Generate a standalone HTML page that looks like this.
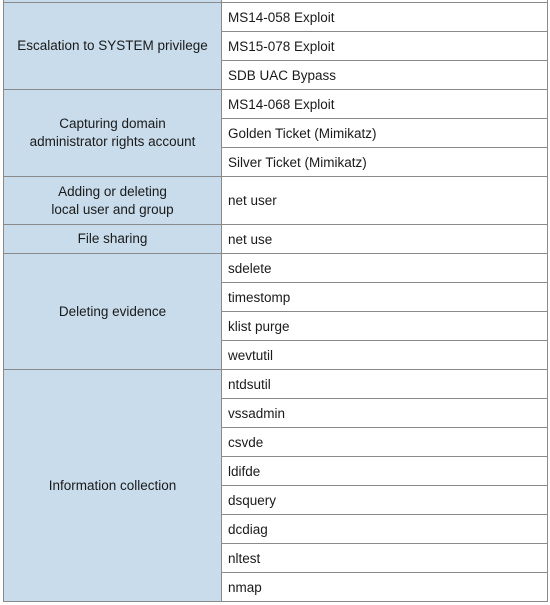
<!DOCTYPE html>
<html><head><style>
body{margin:0;width:550px;height:605px;background:#fff;position:relative;overflow:hidden;font-family:"Liberation Sans",sans-serif;font-size:13.5px;color:#1a1a1a}
.c{position:absolute;box-sizing:border-box;border:1px solid #8a8a8a;display:flex;align-items:center}
.l{background:#c8dceb;justify-content:center;text-align:center;line-height:18px}
.r{background:#fff;padding-left:6px}
</style></head><body>
<div class="c l" style="left:3px;top:-27px;width:219px;height:30px"></div>
<div class="c r" style="left:221px;top:-27px;width:327px;height:30px"></div>

<div class="c l" style="left:3px;top:2px;width:219px;height:88px">Escalation to SYSTEM privilege</div>
<div class="c r" style="left:221px;top:2px;width:327px;height:30px">MS14-058 Exploit</div>
<div class="c r" style="left:221px;top:31px;width:327px;height:30px">MS15-078 Exploit</div>
<div class="c r" style="left:221px;top:60px;width:327px;height:30px">SDB UAC Bypass</div>

<div class="c l" style="left:3px;top:89px;width:219px;height:88px">Capturing domain<br>administrator rights account</div>
<div class="c r" style="left:221px;top:89px;width:327px;height:30px">MS14-068 Exploit</div>
<div class="c r" style="left:221px;top:118px;width:327px;height:30px">Golden Ticket (Mimikatz)</div>
<div class="c r" style="left:221px;top:147px;width:327px;height:30px">Silver Ticket (Mimikatz)</div>

<div class="c l" style="left:3px;top:176px;width:219px;height:49px">Adding or deleting<br>local user and group</div>
<div class="c r" style="left:221px;top:176px;width:327px;height:49px">net user</div>

<div class="c l" style="left:3px;top:224px;width:219px;height:30px">File sharing</div>
<div class="c r" style="left:221px;top:224px;width:327px;height:30px">net use</div>

<div class="c l" style="left:3px;top:253px;width:219px;height:117px">Deleting evidence</div>
<div class="c r" style="left:221px;top:253px;width:327px;height:30px">sdelete</div>
<div class="c r" style="left:221px;top:282px;width:327px;height:30px">timestomp</div>
<div class="c r" style="left:221px;top:311px;width:327px;height:30px">klist purge</div>
<div class="c r" style="left:221px;top:340px;width:327px;height:30px">wevtutil</div>

<div class="c l" style="left:3px;top:369px;width:219px;height:233px">Information collection</div>
<div class="c r" style="left:221px;top:369px;width:327px;height:30px">ntdsutil</div>
<div class="c r" style="left:221px;top:398px;width:327px;height:30px">vssadmin</div>
<div class="c r" style="left:221px;top:427px;width:327px;height:30px">csvde</div>
<div class="c r" style="left:221px;top:456px;width:327px;height:30px">ldifde</div>
<div class="c r" style="left:221px;top:485px;width:327px;height:30px">dsquery</div>
<div class="c r" style="left:221px;top:514px;width:327px;height:30px">dcdiag</div>
<div class="c r" style="left:221px;top:543px;width:327px;height:30px">nltest</div>
<div class="c r" style="left:221px;top:572px;width:327px;height:30px">nmap</div>
</body></html>
